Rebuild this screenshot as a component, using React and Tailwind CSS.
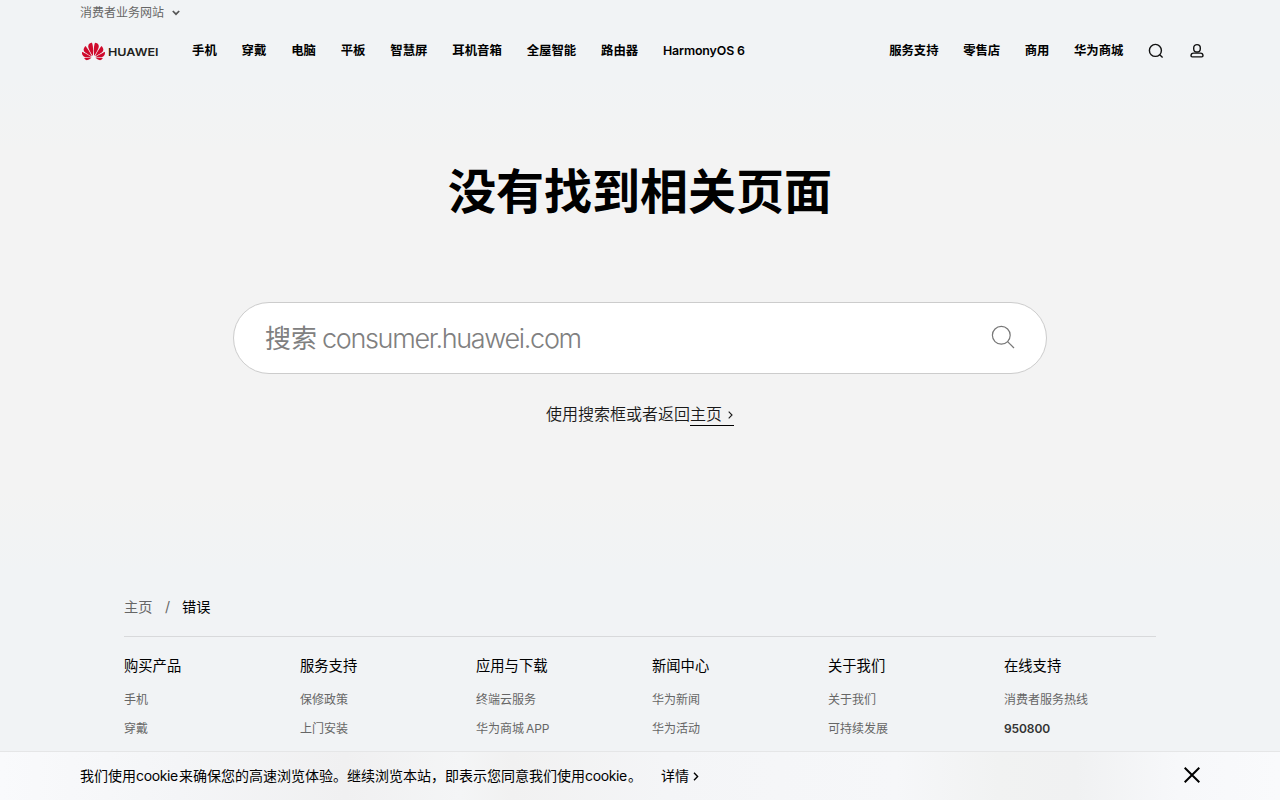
import React from 'react';
import { SiHuawei } from 'react-icons/si';

const leftNav = ['手机', '穿戴', '电脑', '平板', '智慧屏', '耳机音箱', '全屋智能', '路由器'];
const rightNav = ['服务支持', '零售店', '商用', '华为商城'];

const footerColumns = [
    { title: '购买产品', links: ['手机', '穿戴'] },
    { title: '服务支持', links: ['保修政策', '上门安装'] },
    { title: '应用与下载', links: ['终端云服务', '华为商城 APP'] },
    { title: '新闻中心', links: ['华为新闻', '华为活动'] },
    { title: '关于我们', links: ['关于我们', '可持续发展'] },
    { title: '在线支持', links: ['消费者服务热线'], phone: '950800' },
];

function Header() {
    return (
        <header className="h-[80px] shrink-0 bg-[#f1f3f5] pl-20 pr-[75px]">
            <div className="flex h-6 items-center pt-px text-[12px] leading-5 text-[#666]">
                <span>消费者业务网站</span>
                <svg className="ml-2" width="8" height="6" viewBox="0 0 8 6" fill="none" stroke="#555" strokeWidth="1.7">
                    <path d="M0.8 1 L4 4.2 L7.2 1" />
                </svg>
            </div>
            <div className="flex h-[54px] items-center">
                <a className="flex w-[112px] items-center pl-[2px]">
                    <SiHuawei className="size-[23px] text-[#cf0a2c]" />
                    <svg className="ml-[3px] mt-[2px]" width="52" height="14" viewBox="0 0 52 14">
                        <text x="0" y="11" textLength="50.5" lengthAdjust="spacingAndGlyphs" fontFamily="Inter, sans-serif" fontSize="11" fontWeight="600" fill="#231f20">HUAWEI</text>
                    </svg>
                </a>
                <nav className="flex flex-1 items-center gap-[24.8px] text-[12.4px] font-bold leading-5 text-black">
                    {leftNav.map((item) => <a key={item}>{item}</a>)}
                    <a className="font-semibold tracking-[-0.14px]">HarmonyOS 6</a>
                </nav>
                <nav className="flex items-center gap-[24.8px] text-[12.4px] font-bold leading-5 text-black">
                    <div className="flex items-center gap-[24.6px] text-[12.35px]">
                        {rightNav.map((item) => <a key={item}>{item}</a>)}
                    </div>
                    <svg width="16" height="16" viewBox="0 0 16 16" fill="none" stroke="#111" strokeWidth="1.4">
                        <circle cx="7.4" cy="7.4" r="6" />
                        <path d="M11.7 11.7 L14.6 14.6" />
                    </svg>
                    <svg width="16" height="16" viewBox="0 0 16 16" fill="none" stroke="#111" strokeWidth="1.4">
                        <rect x="4.7" y="1.6" width="6.6" height="7.4" rx="3.3" />
                        <path d="M4.6 10.1 H11.4 C12.8 10.1 14 11.4 14 12.8 C14 13.6 13.6 13.9 12.8 13.9 H3.2 C2.4 13.9 2 13.6 2 12.8 C2 11.4 3.2 10.1 4.6 10.1 Z" />
                    </svg>
                </nav>
            </div>
        </header>
    );
}

function SearchBox() {
    return (
        <div className="mt-[74px] flex h-[72px] w-[814px] items-center justify-between rounded-full border border-[#ccc] bg-white pl-[31px] pr-[31px]">
            <div className="flex items-center pt-[2px] text-[26px] leading-9 text-[#808080]">
                <span className="font-normal">搜索</span>
                <span className="ml-[5px] text-[27px] font-light tracking-[-1.33px]">consumer.huawei.com</span>
            </div>
            <svg className="-mt-[2px]" width="24" height="24" viewBox="0 0 24 24" fill="none" stroke="#777" strokeWidth="1.2">
                <circle cx="10.3" cy="10.3" r="8.9" />
                <path d="M16.6 16.6 L23 23" />
            </svg>
        </div>
    );
}

function Footer() {
    return (
        <footer className="flex-1 bg-[#f1f3f5] px-[124px]">
            <div className="flex h-[67px] items-center border-b border-[#d8d9db] pt-[7px] text-[14.2px] leading-5">
                <a className="w-[41px] text-[#666]">主页</a>
                <span className="w-[17px] text-[#666]">/</span>
                <span className="text-black">错误</span>
            </div>
            <div className="grid grid-cols-[repeat(6,176px)] pt-[19px]">
                {footerColumns.map((col) => (
                    <div key={col.title} className="flex flex-col">
                        <h3 className="text-[14.3px] leading-5 text-black">{col.title}</h3>
                        <ul className="mt-[14px] flex flex-col gap-[9px] text-[12px] leading-5 text-[#666]">
                            {col.links.map((link) => <li key={link} className="[word-spacing:-1.5px]">{link}</li>)}
                            {col.phone && <li className="font-semibold tracking-[-0.1px] text-[#333]">{col.phone}</li>}
                        </ul>
                    </div>
                ))}
            </div>
        </footer>
    );
}

function CookieBar() {
    return (
        <div className="flex h-[49px] shrink-0 items-center border-t border-[#e5e6e7] bg-[linear-gradient(90deg,#f9fafc_0%,#f4f5f7_14%,#f0f0f1_27%,#f4f5f6_36%,#f1f1f1_40%,#f4f5f7_52%,#f6f7f9_70%,#f1f2f2_78%,#f0f1f2_84%,#f7f8fa_92%,#f9fafc_100%)] px-20 text-[14px] text-black">
            <p className="flex items-center leading-5">
                <span>我们使用</span>
                <span className="w-[43px] tracking-[-0.35px]">cookie</span>
                <span>来确保您的高速浏览体验。继续浏览本站，即表示您同意我们使用</span>
                <span className="w-[43px] tracking-[-0.35px]">cookie</span>
                <span>。</span>
            </p>
            <a className="ml-[19px] flex items-center leading-5">
                详情
                <svg className="ml-[4px]" width="6" height="9" viewBox="0 0 6 9" fill="none" stroke="#000" strokeWidth="1.4">
                    <path d="M1 0.8 L4.6 4.5 L1 8.2" />
                </svg>
            </a>
            <svg className="ml-auto mt-[-2px]" width="16" height="16" viewBox="0 0 16 16" fill="none" stroke="#000" strokeWidth="2">
                <path d="M0.7 0.7 L15.3 15.3 M15.3 0.7 L0.7 15.3" />
            </svg>
        </div>
    );
}

export default function App() {
    return (
        <div className="flex h-[800px] w-full flex-col overflow-hidden bg-[#f3f3f3] font-['Inter','Noto_Sans_CJK_SC',sans-serif]">
            <Header />
            <main className="flex h-[490px] shrink-0 flex-col items-center bg-[linear-gradient(180deg,#f1f3f5_0%,#f3f3f3_14%,#f3f3f3_84%,#f1f3f5_100%)] pt-[76px]">
                <h1 className="text-[48px] font-bold leading-[72px] text-black">没有找到相关页面</h1>
                <SearchBox />
                <p className="mt-[29px] flex items-start text-[16px] font-[350] leading-[22px] text-[#191919]">
                    <span>使用搜索框或者返回</span>
                    <a className="flex w-[44px] items-center border-b border-black">
                        主页
                        <svg className="ml-[6px] mt-px" width="5" height="8" viewBox="0 0 5 8" fill="none" stroke="#191919" strokeWidth="1.1">
                            <path d="M0.7 0.7 L4 4 L0.7 7.3" />
                        </svg>
                    </a>
                </p>
            </main>
            <Footer />
            <CookieBar />
        </div>
    );
}
